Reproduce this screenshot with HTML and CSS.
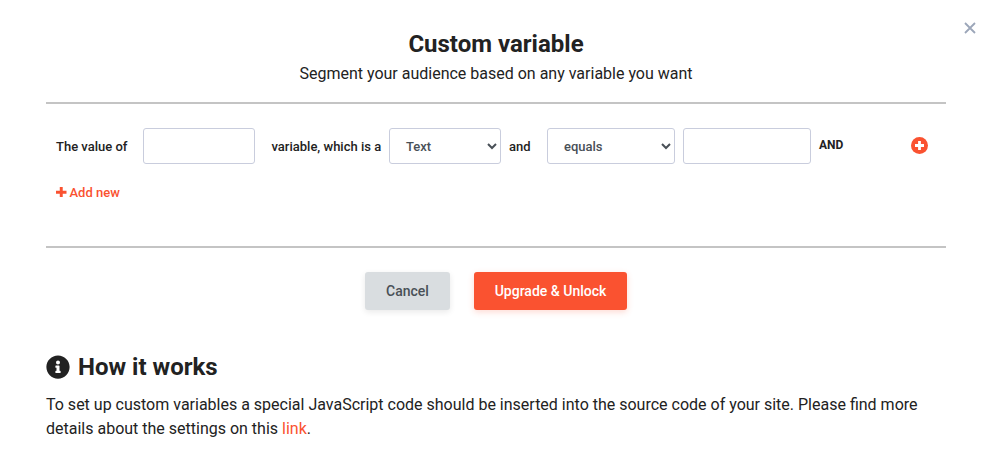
FILE: index.html
```html
<!DOCTYPE html>
<html lang="en">
<head>
<meta charset="utf-8">
<title>Custom variable</title>
<link rel="stylesheet" href="styles.css">
</head>
<body>
<main class="dialog">
  <button class="close" aria-label="Close"><svg viewBox="0 0 12 12" width="12" height="12"><path d="M1 1l10 10M11 1L1 11"/></svg></button>
  <header class="header">
    <h1>Custom variable</h1>
    <p>Segment your audience based on any variable you want</p>
  </header>
  <section class="rules">
    <div class="row">
      <span class="label name">The value of</span>
      <input class="field short" type="text">
      <span class="label which">variable, which is a</span>
      <div class="field select short">Text<svg class="chev" viewBox="0 0 10 7"><path d="M1 1l4 4 4-4"/></svg></div>
      <span class="label and">and</span>
      <div class="field select">equals<svg class="chev" viewBox="0 0 10 7"><path d="M1 1l4 4 4-4"/></svg></div>
      <input class="field value" type="text">
      <span class="label op">AND</span>
      <svg class="plus" viewBox="0 0 17 17"><circle cx="8.500" cy="8.500" r="8.500"/><path d="M8.500 4v9M4 8.500h9"/></svg>
    </div>
    <a class="add"><svg viewBox="0 0 10 10"><path d="M5 0v10M0 5h10"/></svg>Add new</a>
  </section>
  <div class="actions">
    <button class="btn cancel">Cancel</button>
    <button class="btn primary">Upgrade &amp; Unlock</button>
  </div>
  <section class="help">
    <h2><svg viewBox="0 0 512 512"><path d="M256 8C119.043 8 8 119.083 8 256c0 136.997 111.043 248 248 248s248-111.003 248-248C504 119.083 392.957 8 256 8zm0 110c23.196 0 42 18.804 42 42s-18.804 42-42 42-42-18.804-42-42 18.804-42 42-42zm56 254c0 6.627-5.373 12-12 12h-88c-6.627 0-12-5.373-12-12v-24c0-6.627 5.373-12 12-12h12v-64h-12c-6.627 0-12-5.373-12-12v-24c0-6.627 5.373-12 12-12h64c6.627 0 12 5.373 12 12v100h12c6.627 0 12 5.373 12 12v24z"/></svg>How it works</h2>
    <p>To set up custom variables a special JavaScript code should be inserted into the source code of your site. Please find more details about the settings on this <a>link</a>.</p>
  </section>
</main>
</body>
</html>
```
FILE: styles.css
```css
* { box-sizing: border-box; }
body { margin: 0; background: #fff; color: #222; font-family: Roboto, sans-serif; }
h1, h2, p { margin: 0; }
button { font-family: inherit; border: 0; padding: 0; }
.dialog { width: 900px; margin-left: 46px; padding-top: 28px; }
.close { position: absolute; top: 22px; right: 17px; width: 12px; height: 12px; background: none; }
.close svg { display: block; fill: none; stroke: #9ca6b9; stroke-width: 1.8; }
.header { text-align: center; height: 74px; }
.header h1 { font-size: 24px; line-height: 32px; font-weight: 700; }
.header p { font-size: 16px; line-height: 24px; margin-top: 2px; }
.rules { height: 146px; border-top: 2px solid #c4c4c4; border-bottom: 2px solid #c4c4c4; padding: 24px 10px 0; }
.row { display: flex; height: 36px; align-items: center; }
.label { font-size: 13px; font-weight: 500; line-height: 20px; white-space: nowrap; padding-top: 2px; }
.name { width: 87px; }
.which { width: 118px; margin-left: 16px; padding-left: .5px; }
.and { width: 38px; margin-left: 8px; }
.op { font-size: 12px; font-weight: 700; margin: -4px 0 0 8px; width: 92px; }
.field { flex: none; width: 128px; height: 36px; border: 1px solid #c9cddd; border-radius: 3px; background: #fff; padding: 0 16px; }
.short { width: 112px; }
.value { margin-left: 8px; }
.select { display: flex; align-items: center; justify-content: space-between; padding-right: 3px; font-size: 13px; font-weight: 500; color: #495057; }
.chev { width: 10px; height: 7px; fill: none; stroke: #495057; stroke-width: 2; }
.plus { width: 17px; height: 17px; margin-top: -2px; fill: #fa5230; stroke: #fff; stroke-width: 2.8; }
.plus circle { stroke: none; }
.add { display: flex; align-items: center; gap: 3px; width: max-content; margin-top: 19px; font-size: 13px; line-height: 20px; font-weight: 500; color: #fa5230; }
.add svg { width: 10.500px; height: 10.500px; margin-top: -2px; stroke: currentColor; stroke-width: 2.8; }
.actions { display: flex; justify-content: center; gap: 24px; margin-top: 24px; height: 38px; }
.btn { height: 38px; border-radius: 3px; font-size: 14px; font-weight: 500; }
.cancel { width: 85px; background: #d9dde0; color: #495057; box-shadow: 0 2px 6px rgba(0,0,0,.09); }
.primary { width: 153px; background: #fa5230; color: #fff; box-shadow: 0 2px 6px rgba(250,82,48,.22); }
.help { margin-top: 42px; }
.help h2 { display: flex; align-items: center; gap: 8px; font-size: 24px; line-height: 30px; font-weight: 700; }
.help h2 svg { width: 24px; height: 24px; fill: #222; }
.help p { margin-top: 11px; font-size: 16px; line-height: 24px; }
.help a { color: #fa5230; }
```
